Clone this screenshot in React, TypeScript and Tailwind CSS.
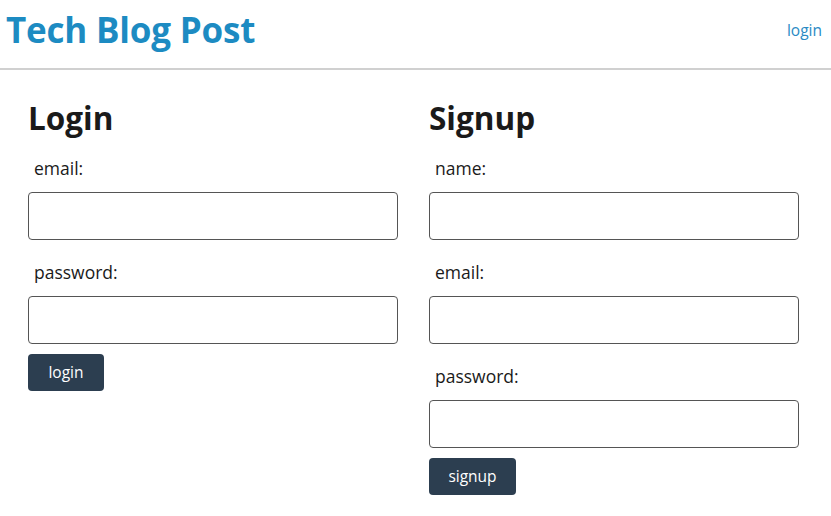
export default function App() {
  const font = { fontFamily: '"Open Sans", "Noto Sans", sans-serif' };

  const Field = ({ label }: { label: string }) => (
    <div className="flex flex-col">
      <label className="h-[56px] pl-[6px] pt-[20px] text-[17.5px] leading-[24px] text-[#1a1a1a]">{label}</label>
      <input className="h-[48px] w-full rounded-[4px] border border-[#555] bg-white" />
    </div>
  );

  return (
    <div className="min-h-screen bg-white" style={font}>
      <header className="flex h-[70px] items-center justify-between border-b-2 border-[#d0d0d0] pb-[6px] pl-[6px] pr-[9px]">
        <h1 className="-mt-[3px] text-[35px] font-bold leading-none tracking-[-0.2px] text-[#1d8bc2]">Tech Blog Post</h1>
        <a className="text-[15.5px] text-[#2a8ac4]">login</a>
      </header>

      <main className="grid grid-cols-[370px_370px] gap-[31px] px-[28px] pt-[26px]">
        <section className="flex flex-col">
          <h2 className="pt-[3px] text-[31.5px] font-bold leading-[37px] text-[#1a1a1a]">Login</h2>
          <Field label="email:" />
          <Field label="password:" />
          <button className="mt-[10px] h-[37px] w-[76px] rounded-[4px] bg-[#2c3e50] text-[15.5px] text-white">login</button>
        </section>

        <section className="flex flex-col">
          <h2 className="pt-[3px] text-[31.5px] font-bold leading-[37px] text-[#1a1a1a]">Signup</h2>
          <Field label="name:" />
          <Field label="email:" />
          <Field label="password:" />
          <button className="mt-[10px] h-[37px] w-[87px] rounded-[4px] bg-[#2c3e50] text-[15.5px] text-white">signup</button>
        </section>
      </main>
    </div>
  );
}
